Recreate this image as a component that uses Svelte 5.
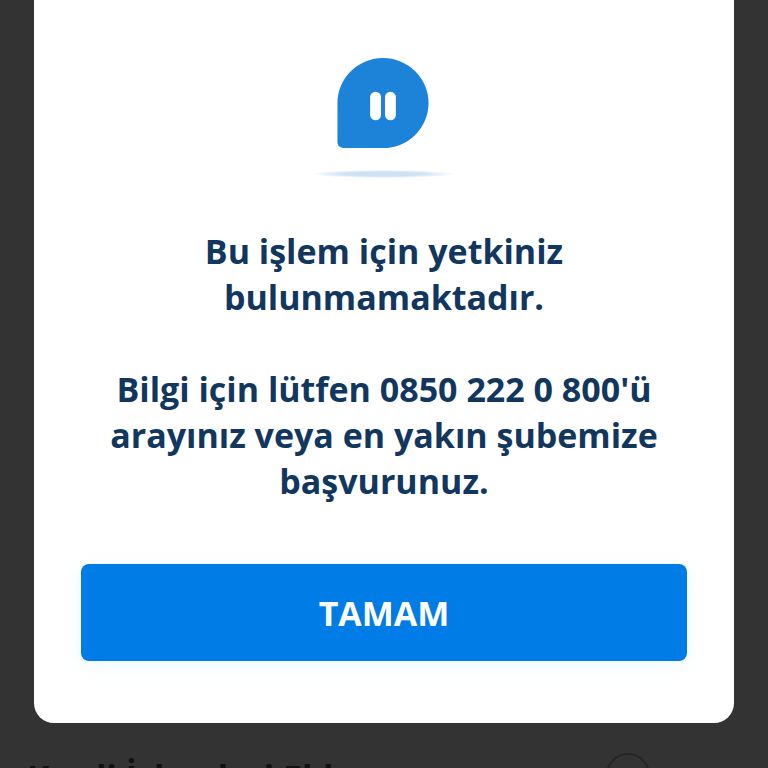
<script>
  const message = ['Bu işlem için yetkiniz', 'bulunmamaktadır.'];
  const info = ["Bilgi için lütfen 0850 222 0 800'ü", 'arayınız veya en yakın şubemize', 'başvurunuz.'];
</script>

<div class="page">
  <div class="modal" role="dialog" aria-modal="true">
    <div class="icon">
      <svg width="92" height="92" viewBox="0 0 92 92" aria-hidden="true">
        <path d="M46 0a46 45.5 0 0 1 0 91H6a6 6 0 0 1-6-6V45.500A46 45.5 0 0 1 46 0Z" fill="#1c83d8" />
        <rect x="33" y="34" width="11" height="29" rx="5.5" fill="#fff" />
        <rect x="48" y="34" width="11" height="29" rx="5.500" fill="#fff" />
      </svg>
      <div class="shadow"></div>
    </div>

    <div class="message">
      {#each message as line}
        <p>{line}</p>
      {/each}
      <p class="gap">&nbsp;</p>
      {#each info as line}
        <p>{line}</p>
      {/each}
    </div>

    <button class="ok">TAMAM</button>
  </div>

  <div class="behind">
    <span class="behind-label">Kredi İşlemleri Ekle</span>
    <span class="behind-toggle"></span>
  </div>
</div>

<style>
  :global(body) {
    margin: 0;
    font-family: "Open Sans", "Liberation Sans", sans-serif;
  }

  .page {
    height: 768px;
    overflow: hidden;
    background: #333333;
    display: flex;
    flex-direction: column;
    align-items: center;
  }

  .modal {
    width: 700px;
    height: 743px;
    margin-top: -20px;
    flex-shrink: 0;
    box-sizing: border-box;
    background: #fff;
    border-radius: 20px;
    padding: 78px 47px 62px;
    display: flex;
    flex-direction: column;
    align-items: center;
  }

  .icon {
    display: flex;
    flex-direction: column;
    align-items: center;
    height: 120px;
  }

  .icon svg {
    display: block;
    margin-right: 2px;
  }

  .shadow {
    width: 144px;
    height: 8px;
    margin-top: 21px;
    margin-right: 2px;
    border-radius: 50%;
    background: radial-gradient(closest-side, #cfe2f4 55%, #eef5fc 85%, #fff 100%);
  }

  .message {
    margin-top: 50px;
    color: #12375f;
    font-size: 34px;
    font-weight: 700;
    line-height: 46px;
    text-align: center;
  }

  .message p {
    margin: 0;
    white-space: nowrap;
  }

  .ok {
    width: 606px;
    height: 97px;
    margin-top: auto;
    border: none;
    border-radius: 8px;
    background: #007ce6;
    box-shadow: 0 4px 20px rgba(0, 170, 255, 0.08);
    color: #fff;
    font-family: inherit;
    font-size: 34px;
    font-weight: 700;
  }

  .behind {
    width: 100%;
    box-sizing: border-box;
    padding: 31px 118px 0 27px;
    display: flex;
    justify-content: space-between;
    align-items: flex-start;
    flex-shrink: 0;
  }

  .behind-label {
    color: #111;
    font-size: 34px;
    font-weight: 700;
    line-height: 46px;
  }

  .behind-toggle {
    width: 40px;
    height: 40px;
    margin-top: -1px;
    border: 2px solid #262626;
    border-radius: 50%;
  }
</style>
